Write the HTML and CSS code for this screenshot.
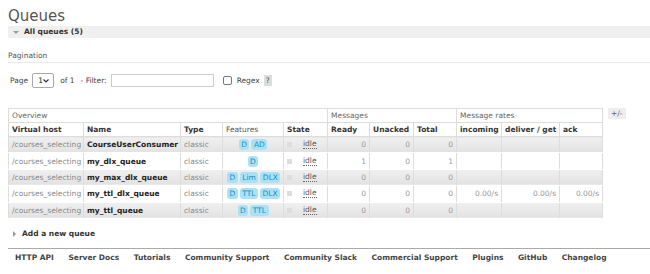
FILE: index.html
```html
<!DOCTYPE html>
<html lang="en">
<head>
  <meta charset="UTF-8" />
  <title>Queues</title>
  <link rel="stylesheet" href="styles.css">
</head>
<body>
  <h1>Queues</h1>
  <div class="section-head"><span class="arrow-down"></span>All queues (5)</div>

  <div class="pagination-label">Pagination</div>
  <div class="filter-row">
    <span>Page</span>
    <span class="select-box">1 <svg width="6" height="4" viewBox="0 0 6 4"><path d="M0.5 0.5 L3 3 L5.5 0.5" fill="none" stroke="#333" stroke-width="1.2"/></svg></span>
    <span class="of">of 1</span>
    <span>- Filter:</span>
    <input class="filter-input" type="text">
    <span class="check"></span>
    <span>Regex</span>
    <span class="help">?</span>
  </div>

  <div class="table-wrap">
    <table class="queues">
      <colgroup>
        <col style="width:75px"><col style="width:97px"><col style="width:42px"><col style="width:61px"><col style="width:44px">
        <col style="width:42px"><col style="width:44px"><col style="width:43px">
        <col style="width:45px"><col style="width:58px"><col style="width:43px">
      </colgroup>
      <thead>
        <tr class="group">
          <th colspan="5">Overview</th>
          <th colspan="3">Messages</th>
          <th colspan="3">Message rates</th>
        </tr>
        <tr class="cols">
          <th>Virtual host</th>
          <th>Name</th>
          <th>Type</th>
          <th class="plain">Features</th>
          <th>State</th>
          <th>Ready</th>
          <th>Unacked</th>
          <th>Total</th>
          <th>incoming</th>
          <th>deliver / get</th>
          <th>ack</th>
        </tr>
      </thead>
      <tbody>
        <tr class="alt">
          <td class="muted">/courses_selecting</td>
          <td class="name">CourseUserConsumer</td>
          <td class="muted">classic</td>
          <td class="features"><span class="tag">D</span><span class="tag">AD</span></td>
          <td><span class="state"><span class="dot"></span><span class="idle">idle</span></span></td>
          <td class="num">0</td><td class="num">0</td><td class="num">0</td>
          <td></td><td></td><td></td>
        </tr>
        <tr>
          <td class="muted">/courses_selecting</td>
          <td class="name">my_dlx_queue</td>
          <td class="muted">classic</td>
          <td class="features"><span class="tag">D</span></td>
          <td><span class="state"><span class="dot"></span><span class="idle">idle</span></span></td>
          <td class="num">1</td><td class="num">0</td><td class="num">1</td>
          <td></td><td></td><td></td>
        </tr>
        <tr class="alt">
          <td class="muted">/courses_selecting</td>
          <td class="name">my_max_dlx_queue</td>
          <td class="muted">classic</td>
          <td class="features"><span class="tag">D</span><span class="tag">Lim</span><span class="tag">DLX</span></td>
          <td><span class="state"><span class="dot"></span><span class="idle">idle</span></span></td>
          <td class="num">0</td><td class="num">0</td><td class="num">0</td>
          <td></td><td></td><td></td>
        </tr>
        <tr>
          <td class="muted">/courses_selecting</td>
          <td class="name">my_ttl_dlx_queue</td>
          <td class="muted">classic</td>
          <td class="features"><span class="tag">D</span><span class="tag">TTL</span><span class="tag">DLX</span></td>
          <td><span class="state"><span class="dot"></span><span class="idle">idle</span></span></td>
          <td class="num">0</td><td class="num">0</td><td class="num">0</td>
          <td class="num">0.00/s</td><td class="num">0.00/s</td><td class="num">0.00/s</td>
        </tr>
        <tr class="alt">
          <td class="muted">/courses_selecting</td>
          <td class="name">my_ttl_queue</td>
          <td class="muted">classic</td>
          <td class="features"><span class="tag">D</span><span class="tag">TTL</span></td>
          <td><span class="state"><span class="dot"></span><span class="idle">idle</span></span></td>
          <td class="num">0</td><td class="num">0</td><td class="num">0</td>
          <td></td><td></td><td></td>
        </tr>
      </tbody>
    </table>
    <span class="toggle">+/-</span>
  </div>

  <div class="add-queue"><span class="arrow-right"></span>Add a new queue</div>

  <div class="footer">
    <a>HTTP API</a>
    <a>Server Docs</a>
    <a>Tutorials</a>
    <a>Community Support</a>
    <a>Community Slack</a>
    <a>Commercial Support</a>
    <a>Plugins</a>
    <a>GitHub</a>
    <a>Changelog</a>
  </div>
</body>
</html>
```

FILE: styles.css
```css
body {
  margin: 0;
  padding: 0 0 0 8px;
  font-family: "DejaVu Sans", Verdana, sans-serif;
  font-size: 7.5px;
  color: #444;
  background: #fff;
  overflow: hidden;
}
h1 {
  margin: 0;
  padding-top: 6px;
  height: 20px;
  font-size: 15px;
  font-weight: normal;
  color: #555;
  line-height: 20px;
}
.section-head {
  background: #f0f0f0;
  height: 12px;
  line-height: 12px;
  font-weight: bold;
  color: #333;
  padding-left: 5px;
  display: flex;
  align-items: center;
  gap: 5px;
}
.arrow-down {
  width: 0;
  height: 0;
  border-left: 3px solid transparent;
  border-right: 3px solid transparent;
  border-top: 3px solid #999;
}
.arrow-right {
  width: 0;
  height: 0;
  border-top: 3px solid transparent;
  border-bottom: 3px solid transparent;
  border-left: 3px solid #999;
}
.pagination-label {
  margin-top: 12px;
  height: 11px;
  line-height: 11px;
  color: #555;
  border-bottom: 1px solid #e8e8e8;
  padding-bottom: 1px;
}
.filter-row {
  margin-top: 10px;
  display: flex;
  align-items: center;
  height: 15px;
  padding-left: 2px;
  color: #444;
}
.select-box {
  margin: 0 6px 0 4px;
  border: 1px solid #aaa;
  border-radius: 2px;
  display: flex;
  align-items: center;
  justify-content: space-between;
  padding: 0 4px 0 5px;
  box-sizing: border-box;
  width: 22px;
  height: 15px;
  color: #222;
}
.of {
  margin-right: 6px;
}
.filter-input {
  margin: 0 9px 0 4px;
  width: 103px;
  height: 13px;
  box-sizing: border-box;
  border: 1px solid #ccc;
  padding: 0;
}
.check {
  width: 7px;
  height: 7px;
  border: 1px solid #777;
  border-radius: 2px;
  margin-right: 5px;
}
.help {
  margin-left: 4px;
  background: #ddd;
  color: #555;
  padding: 1px 2px;
  line-height: 9px;
}
.table-wrap {
  margin-top: 20px;
  display: flex;
  align-items: flex-start;
  gap: 5px;
}
.queues {
  border-collapse: collapse;
  table-layout: fixed;
  width: 594px;
  border: 1px solid #ddd;
}
.queues th,
.queues td {
  padding: 0 3px;
  text-align: left;
  white-space: nowrap;
  overflow: hidden;
}
.queues .group th {
  height: 13px;
  font-weight: normal;
  color: #666;
  border: 1px solid #ddd;
}
.queues .cols th {
  height: 13px;
  font-weight: bold;
  color: #333;
  border: 1px solid #ddd;
}
.queues .cols th.plain {
  font-weight: normal;
  color: #555;
}
.queues td {
  height: 15.4px;
  border-left: 1px solid #ddd;
  border-right: 1px solid #ddd;
  border-bottom: 1px solid #fff;
}
.queues tr.alt td {
  background: linear-gradient(#f0f0f0, #e2e2e2);
}
.muted {
  color: #888;
}
.name {
  font-weight: bold;
  color: #222;
}
.num {
  text-align: right !important;
  color: #999;
}
.features {
  text-align: center !important;
}
.tag {
  display: inline-block;
  background: #a9e2f7;
  color: #1a8ac0;
  border-radius: 3px;
  padding: 0 2.5px;
  margin: 0 1px;
  line-height: 11px;
}
.state {
  display: flex;
  align-items: center;
}
.dot {
  width: 5px;
  height: 5px;
  background: #ddd;
  margin-right: 11px;
}
.idle {
  color: #555;
  border-bottom: 1px dotted #666;
  line-height: 8px;
}
.toggle {
  background: #eee;
  color: #666;
  padding: 1px 3px;
  line-height: 9px;
}
.add-queue {
  margin-top: 9px;
  height: 12px;
  display: flex;
  align-items: center;
  gap: 6px;
  padding-left: 5px;
  font-weight: bold;
  color: #333;
}
.footer {
  margin-top: 8px;
  border-top: 1px solid #aaa;
  padding: 4px 0 0 7px;
  display: flex;
  gap: 14.5px;
  font-weight: bold;
  color: #444;
}
```
